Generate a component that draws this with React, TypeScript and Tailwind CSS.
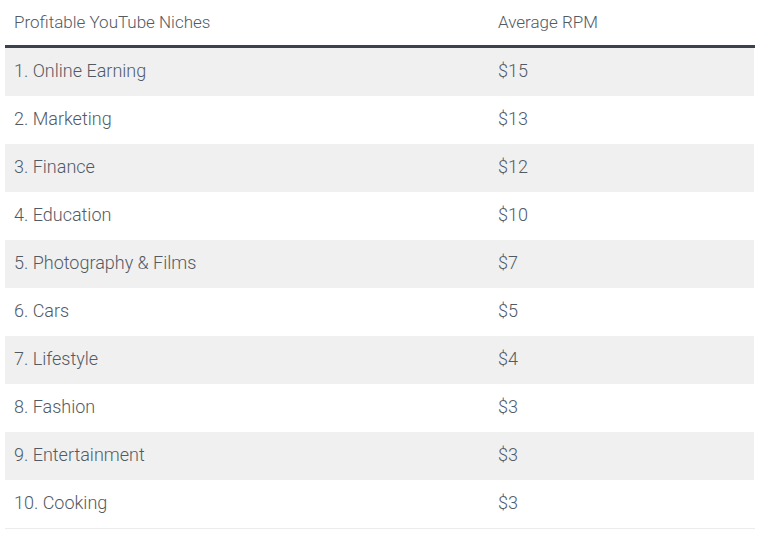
const rows: [string, string][] = [
  ['1. Online Earning', '$15'],
  ['2. Marketing', '$13'],
  ['3. Finance', '$12'],
  ['4. Education', '$10'],
  ['5. Photography & Films', '$7'],
  ['6. Cars', '$5'],
  ['7. Lifestyle', '$4'],
  ['8. Fashion', '$3'],
  ['9. Entertainment', '$3'],
  ['10. Cooking', '$3'],
]

export default function App() {
  return (
    <div className="min-h-screen bg-white text-[#525a64]" style={{ fontFamily: 'Roboto, "Liberation Sans", sans-serif' }}>
      <div className="ml-[5px] w-[750px]">
        <div className="grid grid-cols-[484px_1fr] h-[48px] items-center border-b-[3px] border-[#3b424c] text-[17px] font-light">
          <div className="pl-[9px]">Profitable YouTube Niches</div>
          <div className="pl-[9px]">Average RPM</div>
        </div>
        <div className="border-b border-[#ececec]">
          {rows.map(([name, rpm], i) => (
            <div
              key={name}
              className={`grid grid-cols-[484px_1fr] h-[48px] pb-[3px] items-center text-[18px] font-light ${i % 2 === 0 ? 'bg-[#f0f0f0] w-[749px]' : 'bg-white'}`}
            >
              <div className="pl-[9px]">{name}</div>
              <div className="pl-[9px]">{rpm}</div>
            </div>
          ))}
        </div>
      </div>
    </div>
  )
}
